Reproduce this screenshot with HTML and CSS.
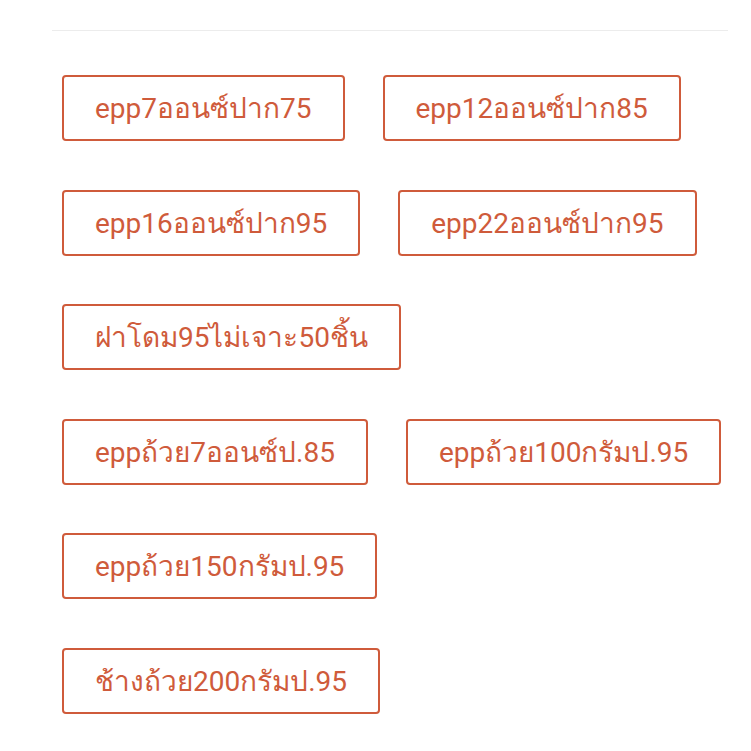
FILE: index.html
```html
<!DOCTYPE html>
<html lang="th">
<head>
    <meta charset="UTF-8">
    <meta name="viewport" content="width=device-width, initial-scale=1.0">
    <title>ตัวเลือกสินค้า</title>
    <link rel="stylesheet" href="styles.css">
</head>
<body>
    <div class="panel">
        <div class="options">
            <span class="option">epp7ออนซ์ปาก75</span>
            <span class="option">epp12ออนซ์ปาก85</span>
            <span class="option">epp16ออนซ์ปาก95</span>
            <span class="option">epp22ออนซ์ปาก95</span>
            <span class="option">ฝาโดม95ไม่เจาะ50ชิ้น</span>
            <span class="option">eppถ้วย7ออนซ์ป.85</span>
            <span class="option">eppถ้วย100กรัมป.95</span>
            <span class="option">eppถ้วย150กรัมป.95</span>
            <span class="option">ช้างถ้วย200กรัมป.95</span>
        </div>
    </div>
</body>
</html>
```

FILE: styles.css
```css
body {
    margin: 0;
    background: #fff;
    font-family: Roboto, "Noto Sans", sans-serif;
}
.panel {
    margin: 30px 23px 0 52px;
    border-top: 1px solid #ececec;
    padding: 44px 0 30px 10px;
}
.options {
    display: flex;
    flex-wrap: wrap;
    column-gap: 38px;
    row-gap: 48.6px;
}
.option {
    display: flex;
    align-items: center;
    box-sizing: border-box;
    height: 66px;
    padding: 0 31px;
    border: 2px solid #cf5b3b;
    border-radius: 4px;
    color: #cf5b3b;
    font-size: 28px;
    white-space: nowrap;
}
```
